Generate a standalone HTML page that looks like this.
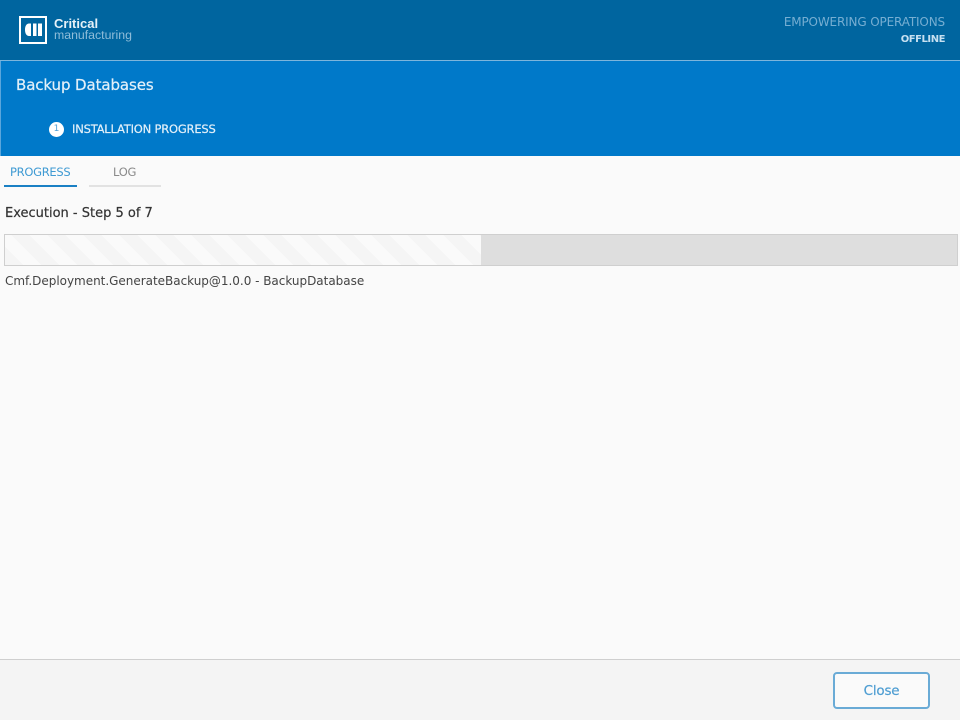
<!DOCTYPE html>
<html><head><meta charset="utf-8"><style>
html,body{margin:0;padding:0;width:960px;height:720px;overflow:hidden;background:#fafafa;font-family:"DejaVu Sans","Liberation Sans",sans-serif}
div{position:absolute;white-space:nowrap;box-sizing:border-box}
</style></head><body>
<div style="left:0;top:0;width:960px;height:60px;background:#00659f"></div>
<div style="left:0;top:60px;width:960px;height:1px;background:#7db5dc"></div>
<div style="left:0;top:61px;width:960px;height:95px;background:#0079c9;border-left:1px solid #5aa6dc"></div>
<div style="left:19px;top:16px;width:28px;height:28px;border:2px solid #fff"></div>
<svg style="position:absolute;left:19px;top:16px" width="28" height="28"><path d="M12 7.500V20H10C7.500 20 6 17.500 6 13.750S7.500 7.500 10 7.500Z M14 7.500H17.500V20H14Z M19 7.500H23V20H19Z" fill="#fff"/></svg>
<div style="left:54px;top:16px;font:bold 13px/15px 'Liberation Sans',sans-serif;color:#e6f1f8">Critical</div>
<div style="left:54px;top:28px;font:12.300px/14px 'Liberation Sans',sans-serif;color:#8fbdd9">manufacturing</div>
<div style="right:15px;top:14px;font-size:12px;line-height:16px;color:#76aed2;letter-spacing:-.15px">EMPOWERING OPERATIONS</div>
<div style="right:15px;top:32px;font-size:10px;line-height:15px;font-weight:bold;color:#c6e0f1;letter-spacing:-.45px">OFFLINE</div>
<div style="left:16px;top:75px;font-size:15px;line-height:20px;color:#e3f0f9;letter-spacing:-.1px;-webkit-text-stroke:.2px #e3f0f9">Backup Databases</div>
<div style="left:49px;top:122px;width:15px;height:15px;border-radius:50%;background:#fff;color:#4f9fd6;font-size:9px;line-height:15px;text-align:center">1</div>
<div style="left:72px;top:121px;font-size:11.500px;line-height:16px;color:#e3f0f9;letter-spacing:-.2px;-webkit-text-stroke:.2px #e3f0f9">INSTALLATION PROGRESS</div>
<div style="left:10px;top:164px;font-size:11.500px;line-height:16px;color:#3f9ad3;letter-spacing:-.3px">PROGRESS</div>
<div style="left:4px;top:185px;width:73px;height:2px;background:#1a80c4"></div>
<div style="left:113px;top:164px;font-size:11.500px;line-height:16px;color:#8a8a8a;letter-spacing:-.3px">LOG</div>
<div style="left:89px;top:185px;width:72px;height:2px;background:#e2e2e2"></div>
<div style="left:5px;top:205px;font-size:13px;line-height:18px;color:#333;-webkit-text-stroke:.2px #333">Execution - Step 5 of 7</div>
<div style="left:4px;top:234px;width:954px;height:32px;background:#dedede;border:1px solid #cfcfcf"></div>
<div style="left:5px;top:235px;width:476px;height:30px;background:repeating-linear-gradient(45deg,#f5f5f5 0,#f5f5f5 12.730px,#fafafa 12.730px,#fafafa 25.460px)"></div>
<div style="left:5px;top:273px;font-size:12px;line-height:16px;color:#444;letter-spacing:-.02px">Cmf.Deployment.GenerateBackup@1.0.0 - BackupDatabase</div>
<div style="left:0;top:659px;width:960px;height:61px;background:#f4f4f4;border-top:1px solid #cfcfcf"></div>
<div style="left:833px;top:672px;width:97px;height:37px;border:2px solid #6aabd6;border-radius:4px;background:#fafafa;color:#4d9dd2;font-size:13.500px;line-height:35px;text-align:center;letter-spacing:-.2px;-webkit-text-stroke:.2px #4d9dd2">Close</div>
</body></html>
